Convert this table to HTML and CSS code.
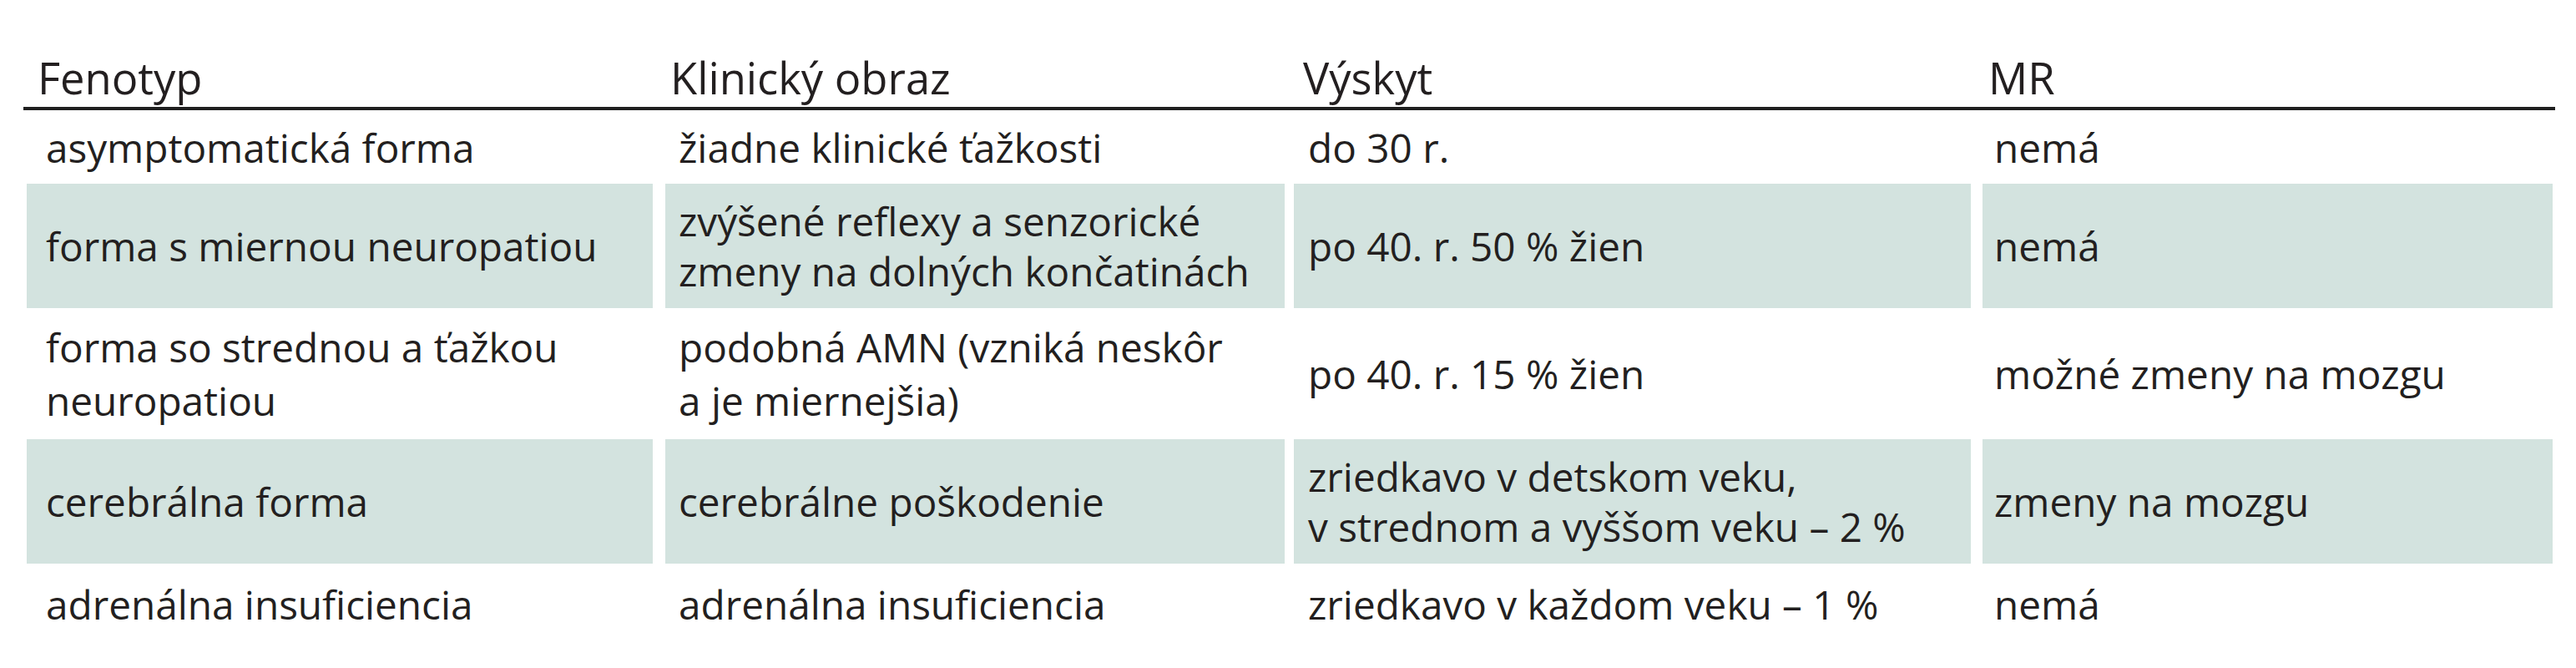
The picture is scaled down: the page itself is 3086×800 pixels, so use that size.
FILE: index.html
```html
<!DOCTYPE html>
<html lang="sk">
<head>
<meta charset="utf-8">
<title>Fenotypy</title>
<link rel="stylesheet" href="styles.css">
</head>
<body>
<table class="tbl">
  <thead>
    <tr>
      <th class="c1">Fenotyp</th>
      <th class="c2">Klinický obraz</th>
      <th class="c3">Výskyt</th>
      <th class="c4">MR</th>
    </tr>
  </thead>
  <tbody>
    <tr>
      <td class="c1">asymptomatická forma</td>
      <td class="c2">žiadne klinické ťažkosti</td>
      <td class="c3">do 30 r.</td>
      <td class="c4">nemá</td>
    </tr>
    <tr class="shade">
      <td class="c1">forma s miernou neuropatiou</td>
      <td class="c2">zvýšené reflexy a senzorické<br>zmeny na dolných končatinách</td>
      <td class="c3">po 40. r. 50 % žien</td>
      <td class="c4">nemá</td>
    </tr>
    <tr class="loose">
      <td class="c1">forma so strednou a ťažkou<br>neuropatiou</td>
      <td class="c2">podobná AMN (vzniká neskôr<br>a je miernejšia)</td>
      <td class="c3">po 40. r. 15 % žien</td>
      <td class="c4">možné zmeny na mozgu</td>
    </tr>
    <tr class="shade">
      <td class="c1">cerebrálna forma</td>
      <td class="c2">cerebrálne poškodenie</td>
      <td class="c3">zriedkavo v detskom veku,<br>v strednom a vyššom veku – 2 %</td>
      <td class="c4">zmeny na mozgu</td>
    </tr>
    <tr>
      <td class="c1">adrenálna insuficiencia</td>
      <td class="c2">adrenálna insuficiencia</td>
      <td class="c3">zriedkavo v každom veku – 1 %</td>
      <td class="c4">nemá</td>
    </tr>
  </tbody>
</table>
</body>
</html>
```

FILE: styles.css
```css
html, body {
  margin: 0;
  padding: 0;
  background: #ffffff;
}

body {
  font-family: "Open Sans", "Noto Sans", "Liberation Sans", sans-serif;
  color: #231f20;
}

.tbl {
  display: grid;
  grid-template-columns: 754px 757px 822px 700px;
  grid-template-rows: 132px 88px 149px 157px 149px 97px;
  width: 3033px;
  margin: 0 0 0 28px;
  border-spacing: 0;
}

.tbl thead,
.tbl tbody,
.tbl tr {
  display: contents;
}

.tbl th,
.tbl td {
  box-sizing: border-box;
  display: flex;
  margin: 0;
  white-space: nowrap;
  text-align: left;
}

.tbl th {
  align-items: flex-end;
  font-size: 52.5px;
  font-weight: 400;
  line-height: 60px;
  padding: 0 0 5px 0;
  border-bottom: 4px solid #1f1f1f;
}

.tbl th.c1 { padding-left: 17px; }
.tbl th.c2 { padding-left: 21px; }
.tbl th.c3 { padding-left: 22px; }
.tbl th.c4 { padding-left: 21px; }

.tbl td {
  align-items: center;
  font-size: 47.7px;
  line-height: 60px;
  padding-top: 0;
  padding-bottom: 0;
  background-clip: padding-box;
  border-style: solid;
  border-color: transparent;
  border-width: 0;
}

.tbl td.c1 { border-left-width: 4px; padding-left: 23px; }
.tbl td.c2 { border-left-width: 15px; padding-left: 16px; }
.tbl td.c3 { border-left-width: 11px; padding-left: 17px; }
.tbl td.c4 { border-left-width: 14px; border-right-width: 3px; padding-left: 14px; }

.tbl tbody tr:first-child td {
  padding-top: 2px;
}

.tbl tr.shade td {
  background-color: #d3e3df;
}

.tbl tr.loose td {
  line-height: 64px;
}
```
